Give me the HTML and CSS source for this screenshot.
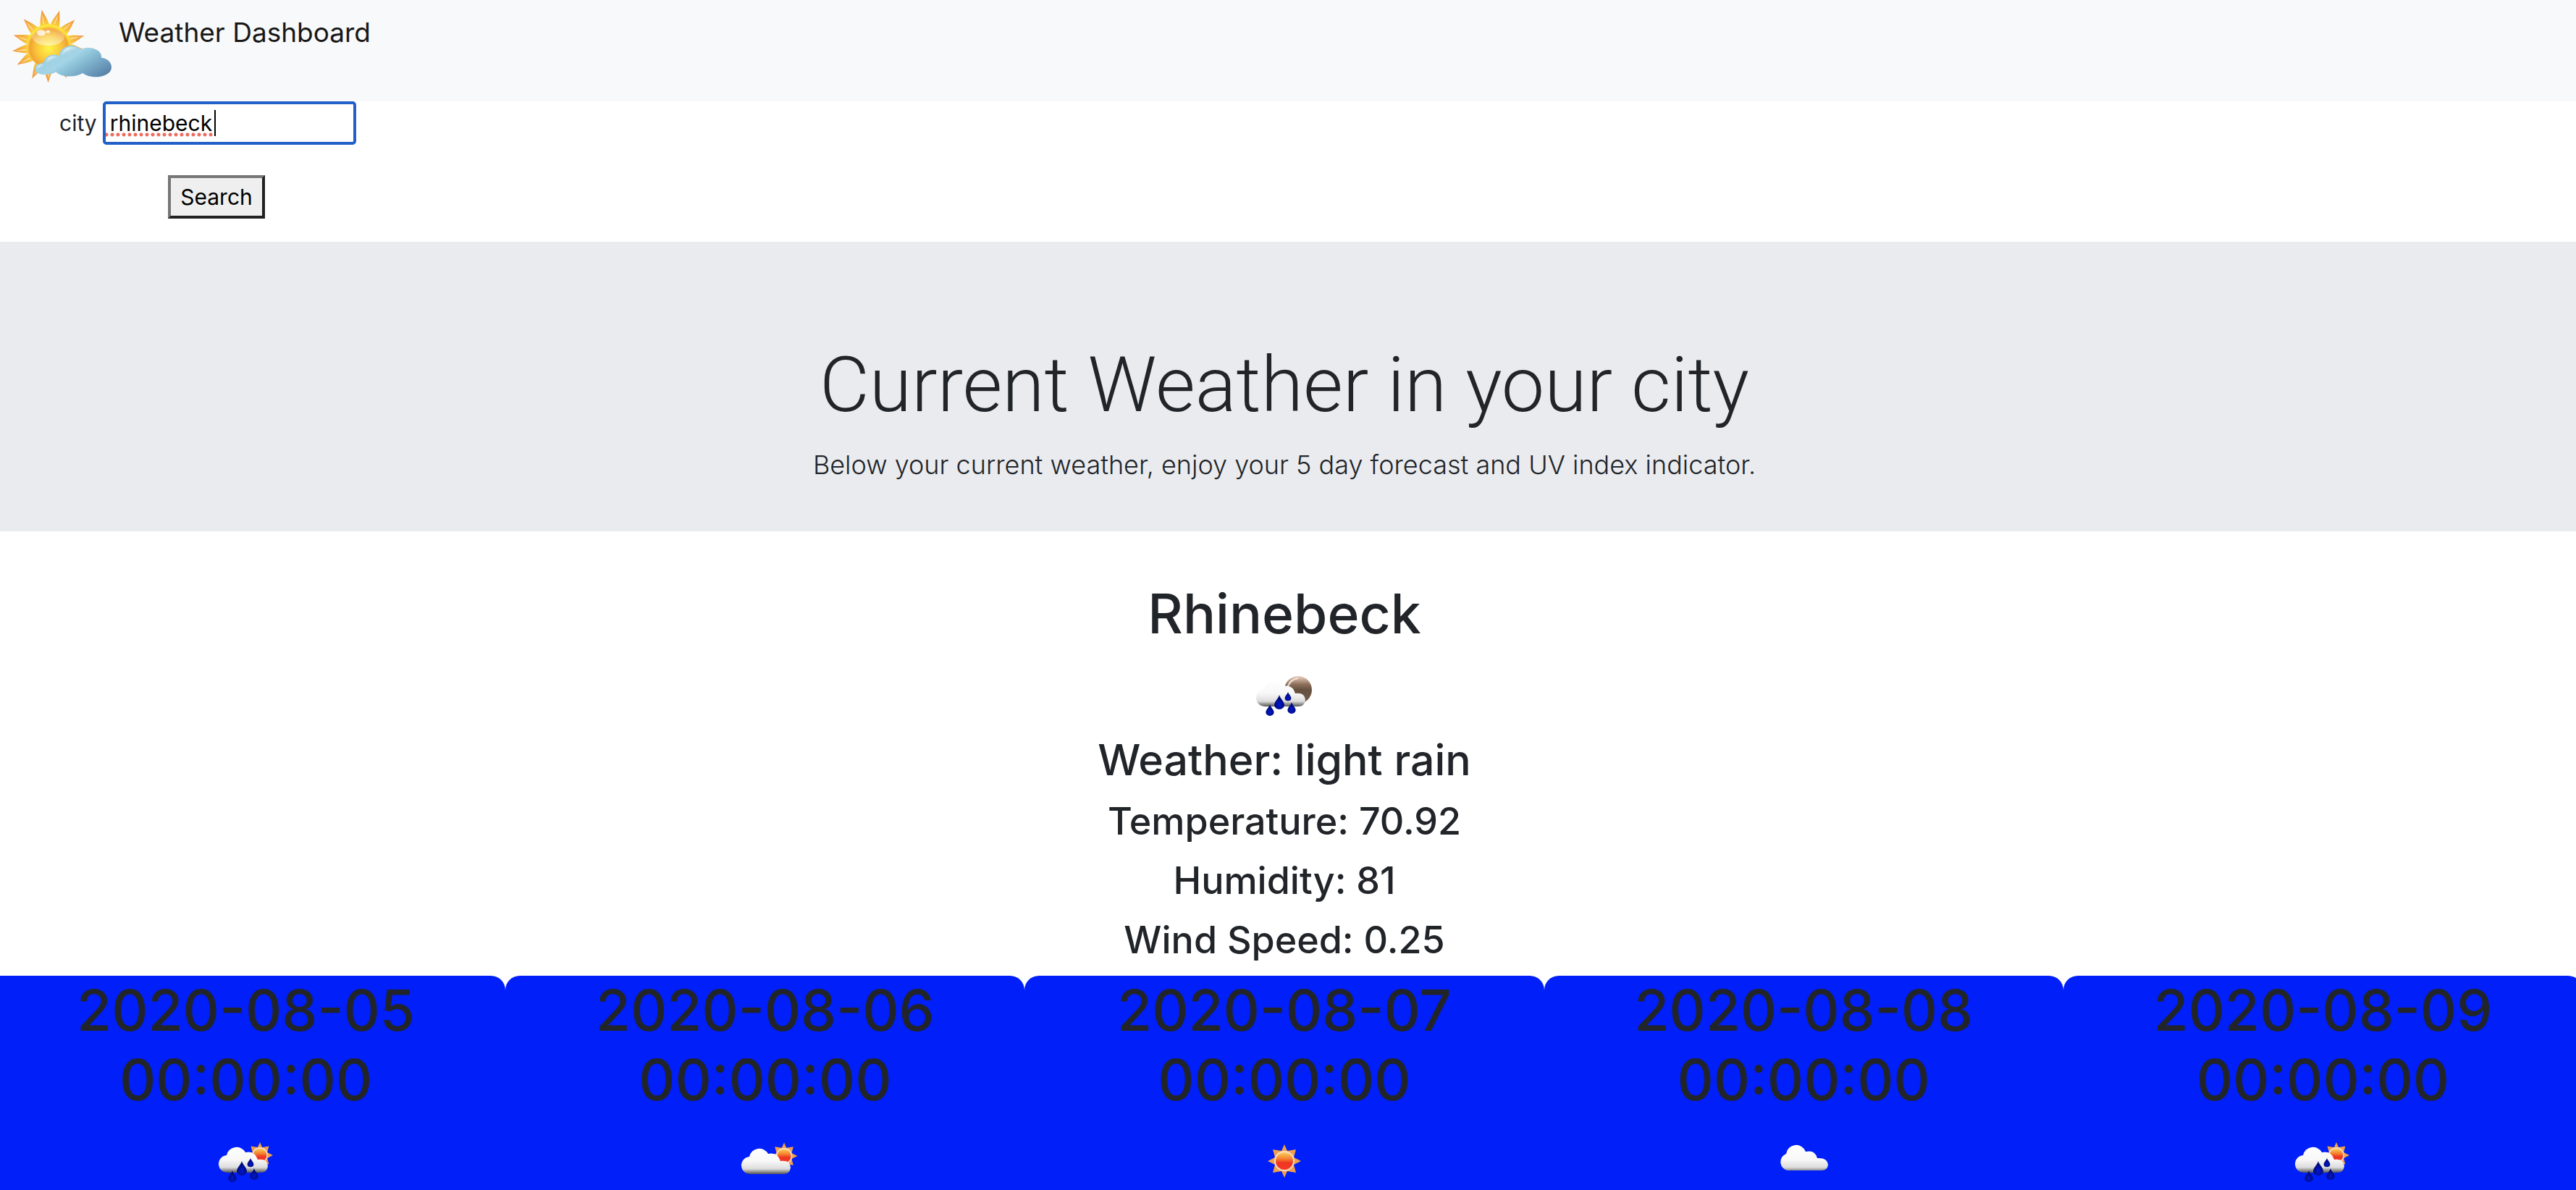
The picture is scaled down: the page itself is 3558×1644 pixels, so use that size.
FILE: index.html
```html
<!DOCTYPE html>
<html lang="en">
<head>
  <meta charset="utf-8">
  <meta name="viewport" content="width=device-width, initial-scale=1">
  <title>Weather Dashboard</title>
  <link rel="stylesheet" href="styles.css">
</head>
<body>
  <svg class="sprite" aria-hidden="true">
    <defs>
      <linearGradient id="cloudFill" x1="0" y1="24" x2="0" y2="64" gradientUnits="userSpaceOnUse">
        <stop offset="0" stop-color="#fff"/><stop offset=".55" stop-color="#f8f8f8"/>
        <stop offset=".82" stop-color="#dcdcdc"/><stop offset="1" stop-color="#555"/>
      </linearGradient>
      <linearGradient id="sunFill" x1="0" y1="0" x2="0" y2="1">
        <stop offset="0" stop-color="#fbd05c"/><stop offset=".4" stop-color="#f37a2c"/><stop offset=".6" stop-color="#ee3524"/><stop offset="1" stop-color="#f03a26"/>
      </linearGradient>
      <linearGradient id="moonFill" x1="0" y1="0" x2="0" y2="1">
        <stop offset="0" stop-color="#eed3c1"/><stop offset=".3" stop-color="#8d705c"/><stop offset=".5" stop-color="#66503f"/><stop offset="1" stop-color="#735a47"/>
      </linearGradient>
      <radialGradient id="dropFill" cx=".5" cy=".68" r=".5">
        <stop offset="0" stop-color="#0018d8"/><stop offset="1" stop-color="#000a6e"/>
      </radialGradient>
      <g id="sunShape">
        <path fill="#f0a04a" d="M0-23 4-14 16-16 13-5 23 0 13 5 16 16 4 14 0 23-4 14-16 16-13 5-23 0-13-5-16-16-4-14Z"/>
        <circle r="14" fill="#f9dcc8"/>
        <circle r="12" fill="url(#sunFill)"/>
      </g>
      <path id="drop" fill="url(#dropFill)" d="M0-10C1-5 7-1 7 4A7 6 0 0 1-7 4C-7-1-1-5 0-10Z"/>
      <path id="rainCloud" fill="url(#cloudFill)" d="M25 64A12 12 0 0 1 23 40A14 14 0 0 1 49 36Q62 33 66 46Q79 44 80 55Q79 64 70 64Z"/>
      <g id="drops">
        <use href="#drop" transform="translate(44 58)"/>
        <use href="#drop" transform="translate(56 50) scale(.62)"/>
        <use href="#drop" transform="translate(31 69) scale(.8)"/>
        <use href="#drop" transform="translate(61 66) scale(.8)"/>
      </g>
    </defs>
    <symbol id="rain-day" viewBox="0 0 100 84">
      <use href="#sunShape" transform="translate(69 40) scale(.78)"/>
      <use href="#rainCloud"/><use href="#drops"/>
    </symbol>
    <symbol id="rain-night" viewBox="0 0 100 84">
      <circle cx="69" cy="41" r="19" fill="url(#moonFill)"/>
      <path d="M54 40Q56 27 69 25" fill="none" stroke="#f3e4da" stroke-width="2"/>
      <g transform="translate(-1 0)"><use href="#rainCloud"/><use href="#drops"/></g>
    </symbol>
    <symbol id="few-clouds" viewBox="0 0 100 84">
      <use href="#sunShape" transform="translate(76 41) scale(.8)"/>
      <use href="#rainCloud" transform="translate(5 2)"/>
    </symbol>
    <symbol id="clear" viewBox="0 0 100 84">
      <use href="#sunShape" transform="translate(50 48)"/>
    </symbol>
    <symbol id="clouds" viewBox="0 0 100 84">
      <path fill="url(#cloudFill)" d="M28 61A12 12 0 0 1 26 38A14 14 0 0 1 53 35Q66 32 69 44Q83 43 84 53Q83 61 75 61Z"/>
    </symbol>
  </svg>

  <nav class="navbar">
    <a class="brand" href="#">
      <svg class="logo" viewBox="0 0 480 390" aria-hidden="true">
        <defs>
          <linearGradient id="rayFill" x1="0" y1="0" x2="0" y2="1">
            <stop offset="0" stop-color="#ee8a34"/><stop offset="1" stop-color="#fbd040"/>
          </linearGradient>
          <radialGradient id="discFill" cx=".5" cy=".55" r=".5">
            <stop offset="0" stop-color="#fff54a"/><stop offset=".55" stop-color="#fac83a"/>
            <stop offset=".88" stop-color="#f2a335"/><stop offset="1" stop-color="#fce23c"/>
          </radialGradient>
          <linearGradient id="shineFill" x1="0" y1="0" x2="0" y2="1">
            <stop offset="0" stop-color="#fff" stop-opacity=".05"/><stop offset="1" stop-color="#fff" stop-opacity=".5"/>
          </linearGradient>
          <linearGradient id="blueFill" x1="200" y1="200" x2="330" y2="400" gradientUnits="userSpaceOnUse">
            <stop offset="0" stop-color="#98cce0"/><stop offset=".35" stop-color="#a4d4e6"/>
            <stop offset=".48" stop-color="#8dc3d9"/><stop offset="1" stop-color="#5078a2"/>
          </linearGradient>
          <linearGradient id="puffFill" x1="0" y1="0" x2=".7" y2="1">
            <stop offset="0" stop-color="#fff"/><stop offset=".2" stop-color="#f4fafc"/><stop offset=".65" stop-color="#a0d0e4" stop-opacity="0"/>
          </linearGradient>
          <g id="ray">
            <path fill="url(#rayFill)" d="M-19-84C-17-112-5-132 0-153C5-132 17-112 19-84Z"/>
            <path fill="#fdeac0" opacity=".75" d="M-6-94Q-6-120 0-138Q1-115-1-94Z"/>
          </g>
        </defs>
        <g transform="translate(202 190)">
          <use href="#ray" transform="rotate(-11)"/><use href="#ray" transform="rotate(17)"/>
          <use href="#ray" transform="rotate(45)"/><use href="#ray" transform="rotate(74)"/>
          <use href="#ray" transform="rotate(97)"/><use href="#ray" transform="rotate(151)"/>
          <use href="#ray" transform="rotate(181)"/><use href="#ray" transform="rotate(207)"/>
          <use href="#ray" transform="rotate(239)"/><use href="#ray" transform="rotate(262)"/>
          <use href="#ray" transform="rotate(287)"/><use href="#ray" transform="rotate(317)"/>
          <circle r="90" fill="url(#discFill)"/>
          <ellipse cx="-2" cy="-38" rx="67" ry="37" fill="url(#shineFill)"/>
          <ellipse cx="-31" cy="-54" rx="18" ry="12" fill="#fff" opacity=".75"/>
          <ellipse cx="-3" cy="-59" rx="9" ry="6" fill="#fff" opacity=".75"/>
        </g>
        <path fill="url(#blueFill)" d="M145 285C147 268 162 260 181 261C184 234 216 218 245 231C249 192 300 174 335 203C370 190 424 203 420 239C452 242 470 270 459 292C440 326 370 326 343 303C310 322 255 322 231 298C208 316 142 314 145 285Z"/>
        <path fill="url(#puffFill)" d="M253 234C256 196 300 184 326 205C300 214 290 228 270 242Z"/>
        <path fill="url(#puffFill)" d="M189 262C193 235 220 225 245 238C222 246 215 262 198 272Z"/>
        <path fill="url(#puffFill)" d="M151 289C152 272 166 264 184 268C168 276 166 288 156 298Z"/>
      </svg>
      <span>Weather Dashboard</span>
    </a>
  </nav>

  <form class="search">
    <div class="field">
      <label for="city">city</label>
      <input class="city-input" id="city" type="text" value="rhinebeck">
    </div>
    <button class="search-button" type="button">Search</button>
  </form>

  <header class="hero">
    <h1 class="hero-title">Current Weather in your city</h1>
    <p class="hero-lead">Below your current weather, enjoy your 5 day forecast and UV index indicator.</p>
  </header>

  <main class="current">
    <h2 class="place">Rhinebeck</h2>
    <svg class="icon icon-current" role="img" aria-label="light rain"><use href="#rain-night"/></svg>
    <h3 class="summary">Weather: light rain</h3>
    <p class="reading">Temperature: 70.92</p>
    <p class="reading">Humidity: 81</p>
    <p class="reading">Wind Speed: 0.25</p>
  </main>

  <section class="forecast">
    <article class="card"><h2 class="date">2020-08-05 00:00:00</h2><svg class="icon" role="img" aria-label="rain"><use href="#rain-day"/></svg></article>
    <article class="card"><h2 class="date">2020-08-06 00:00:00</h2><svg class="icon" role="img" aria-label="few clouds"><use href="#few-clouds"/></svg></article>
    <article class="card"><h2 class="date">2020-08-07 00:00:00</h2><svg class="icon" role="img" aria-label="clear sky"><use href="#clear"/></svg></article>
    <article class="card"><h2 class="date">2020-08-08 00:00:00</h2><svg class="icon" role="img" aria-label="clouds"><use href="#clouds"/></svg></article>
    <article class="card"><h2 class="date">2020-08-09 00:00:00</h2><svg class="icon" role="img" aria-label="rain"><use href="#rain-day"/></svg></article>
  </section>
</body>
</html>
```
FILE: styles.css
```css
* { box-sizing: border-box; }

body {
  margin: 0;
  min-height: 100vh;
  display: flex;
  flex-direction: column;
  overflow-x: hidden;
  background: #fff;
  color: #212529;
  font-family: Inter, "Liberation Sans", sans-serif;
  font-size: 32px;
  line-height: 48px;
}

h1, h2, h3, p { margin: 0; }

.sprite { position: absolute; width: 0; height: 0; }

.navbar { background: #f8f9fb; padding-bottom: 10px; }

.brand {
  display: inline-flex;
  gap: 4px;
  color: #181818;
  font-size: 37px;
  line-height: 90px;
  text-decoration: none;
  vertical-align: top;
}

.logo { width: 160px; height: 130px; }

.search { padding-bottom: 32px; font-size: 30px; }

.field {
  display: flex;
  align-items: center;
  gap: 8px;
  padding-left: 82px;
}

.city-input {
  width: 350px;
  height: 60px;
  padding: 0 6px;
  border: 4px solid #2160c8;
  border-radius: 5px;
  outline: none;
  color: #000;
  font: inherit;
  /* caret, then the spelling-mark dots masked to the word's width */
  background:
    linear-gradient(#000, #000) 150px 8px / 2px 36px no-repeat,
    linear-gradient(#fff, #fff) 149px 0 / 100% 100% no-repeat,
    radial-gradient(circle, #ee6a5c 2px, transparent 3px) 5px 38px / 8px 8px repeat-x,
    #fff;
}

.search-button {
  display: block;
  margin: 42px 0 0 232px;
  width: 134px;
  height: 60px;
  padding: 0;
  border: 4px solid;
  border-color: #767676 #212121 #212121 #767676;
  background: #efefef;
  color: #000;
  font: inherit;
}

.hero {
  padding: 128px 10px 62px 0;
  background: #eaebef;
  text-align: center;
  font-weight: 300;
}

.hero-title {
  margin-bottom: 10px;
  font-family: Roboto, Inter, sans-serif;
  font-size: 106px;
  font-weight: 300;
  line-height: 140px;
}

.hero-lead { font-size: 36px; line-height: 60px; }

.current {
  padding: 66px 10px 0 0;
  text-align: center;
  font-weight: 500;
}

.place { font-size: 75px; font-weight: 500; line-height: 96px; }

.icon { display: block; width: 100px; height: 84px; margin: 0 auto; }

.icon-current { margin-top: 16px; margin-bottom: 16px; }

.summary {
  margin-bottom: 14px;
  font-size: 59px;
  font-weight: 500;
  line-height: 76px;
}

.reading { margin-bottom: 16px; font-size: 52px; line-height: 66px; }

.forecast {
  flex: 1;
  display: grid;
  grid-template-columns: repeat(5, 1fr);
  margin: 0 -9px 0 -19px;
}

.card {
  padding: 0 80px;
  border-radius: 20px 20px 0 0;
  background: #001ff9;
  text-align: center;
}

.date {
  margin-bottom: 16px;
  font-size: 78px;
  font-weight: 500;
  line-height: 96px;
}
```
